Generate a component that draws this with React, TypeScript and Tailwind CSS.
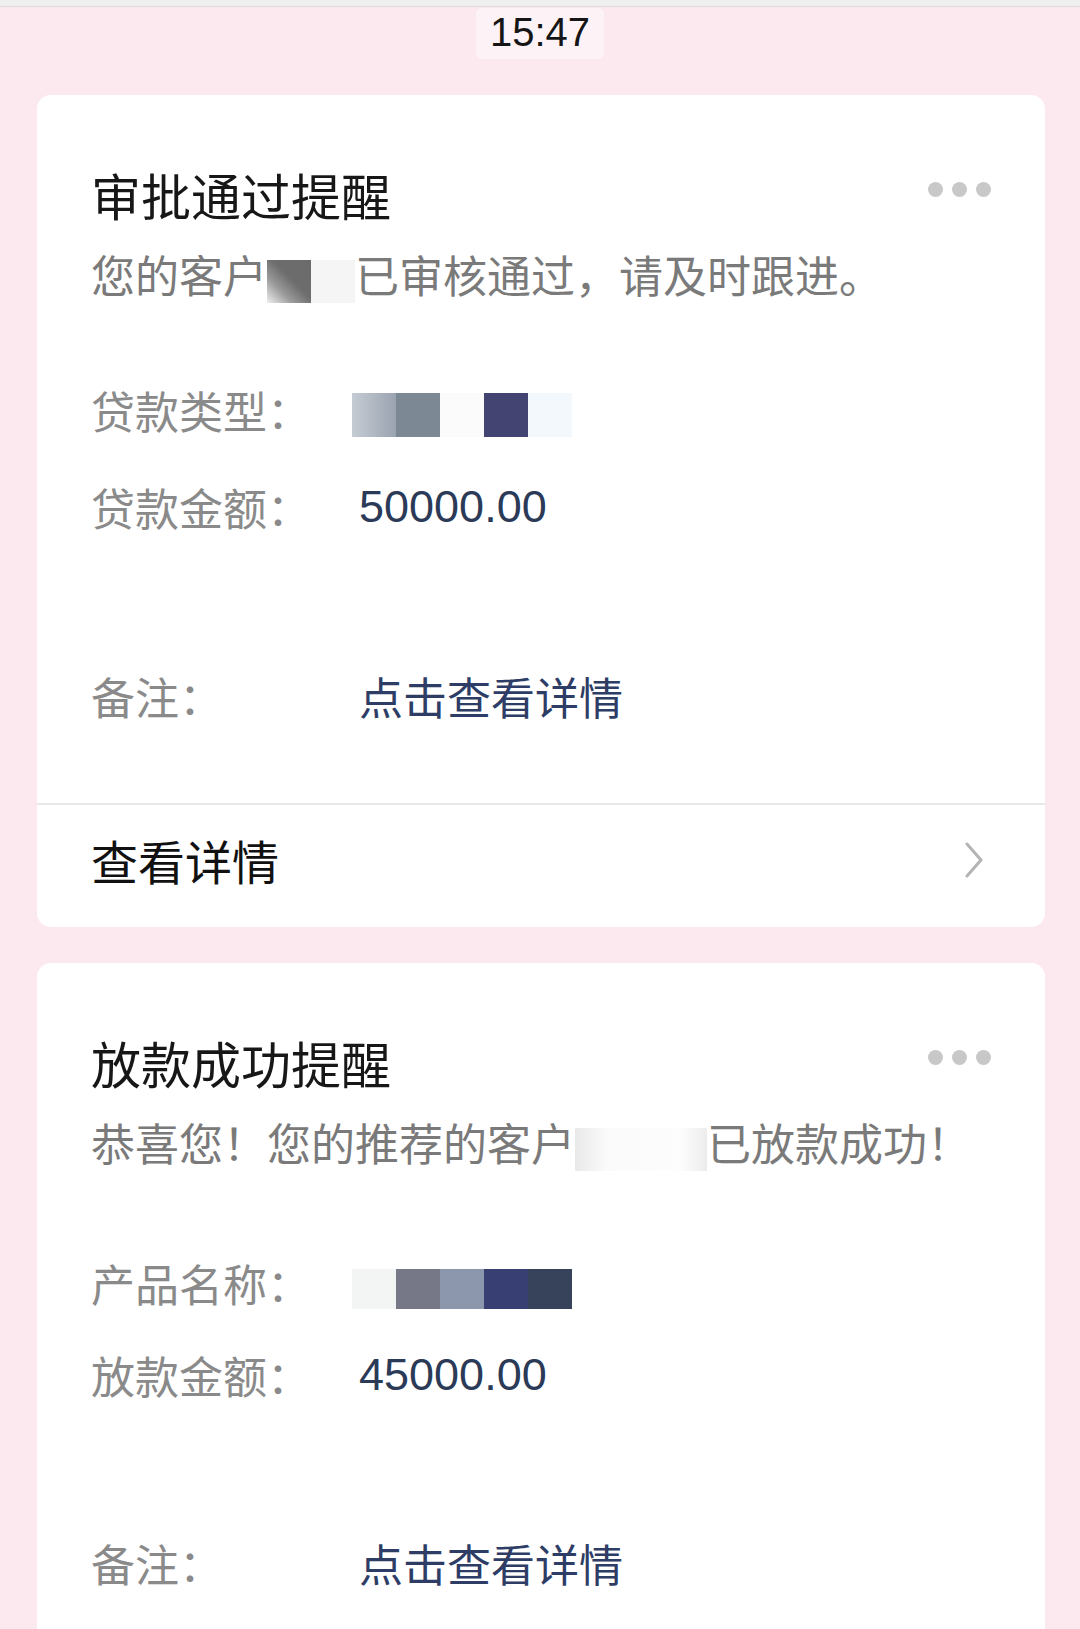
import type { ReactNode } from "react"

const CJK = "font-['Noto_Sans_CJK_SC','Liberation_Sans',sans-serif]"
const NUM = "font-['Liberation_Sans','Noto_Sans_CJK_SC',sans-serif]"

function Dots() {
  return (
    <div className="mt-[18px] flex gap-[9px]">
      <span className="h-[15px] w-[15px] rounded-full bg-[#c8c8c8]" />
      <span className="h-[15px] w-[15px] rounded-full bg-[#c8c8c8]" />
      <span className="h-[15px] w-[15px] rounded-full bg-[#c8c8c8]" />
    </div>
  )
}

function Row({ label, className, children }: { label: string; className: string; children: ReactNode }) {
  return (
    <div className={`flex h-[60px] items-center ${className}`}>
      <span className="w-[268px] shrink-0 text-[44px] leading-[60px] text-[#8a8a8a]">{label}</span>
      {children}
    </div>
  )
}

function Blocks({ colors, className }: { colors: string[]; className: string }) {
  return (
    <div className={`-ml-[7px] flex ${className}`}>
      {colors.map((c, i) => (
        <span key={i} className={`w-[44px] ${c}`} />
      ))}
    </div>
  )
}

function Header({ title }: { title: string }) {
  return (
    <div className="flex h-[60px] items-start justify-between">
      <h2 className="text-[50px] leading-[60px] text-[#171717]">{title}</h2>
      <Dots />
    </div>
  )
}

export default function App() {
  return (
    <div className={`${CJK} h-[1629px] w-[1080px] overflow-hidden bg-[#fbe9ef]`}>
      <div className="h-[7px] border-b border-[#dcdcdc] bg-[#efefef]" />
      <div className="mx-auto mt-[1px] flex h-[51px] w-[128px] items-center justify-center rounded-[6px] bg-[#fdf3f6] pb-[4px]">
        <span className={`${NUM} text-[40px] leading-none text-[#151515]`}>15:47</span>
      </div>
      <div className="mt-[36px] flex flex-col gap-[36px] pl-[37px] pr-[35px]">
        {/* 审批通过 */}
        <div className="overflow-hidden rounded-[14px] bg-white">
          <div className="px-[54px] pt-[69px]">
            <Header title="审批通过提醒" />
            <p className="mt-[20px] h-[60px] whitespace-nowrap text-[44px] leading-[60px] text-[#7a7a7a]">
              您的客户
              <span className="inline-block h-[43px] w-[44px] align-middle bg-[linear-gradient(45deg,#f0f0f0_0%,#9a9a9a_30%,#6d6d6d_55%,#6a6a6a_100%)]" />
              <span className="inline-block h-[43px] w-[44px] align-middle bg-[#f5f5f5]" />
              已审核通过，请及时跟进。
            </p>
            <Row label="贷款类型：" className="mt-[76px]">
              <Blocks
                className="mt-[10px] h-[44px]"
                colors={[
                  "bg-[linear-gradient(90deg,#c6ccd4,#9aa3b0)]",
                  "bg-[#7c8893]",
                  "bg-[#fbfbfb]",
                  "bg-[#434471]",
                  "bg-[#f2f8fb]",
                ]}
              />
            </Row>
            <Row label="贷款金额：" className="mt-[37px]">
              <span className={`${NUM} text-[45px] leading-[60px] text-[#2b3a57]`}>50000.00</span>
            </Row>
            <Row label="备注：" className="mt-[129px]">
              <span className="text-[44px] leading-[60px] text-[#2d3d66]">点击查看详情</span>
            </Row>
          </div>
          <div className="mt-[77px] h-[2px] bg-[#e8e8e8]" />
          <div className="flex h-[110px] items-center justify-between pl-[54px] pr-[61px]">
            <span className="text-[47px] leading-[60px] text-[#111]">查看详情</span>
            <svg width="20" height="36" viewBox="0 0 20 36" fill="none">
              <polyline points="3,2 17,18 3,34" stroke="#b4b4b4" strokeWidth="3" strokeLinecap="round" strokeLinejoin="round" />
            </svg>
          </div>
          <div className="h-[12px]" />
        </div>

        {/* 放款成功 */}
        <div className="overflow-hidden rounded-[14px] bg-white">
          <div className="px-[54px] pt-[69px]">
            <Header title="放款成功提醒" />
            <p className="mt-[20px] h-[60px] whitespace-nowrap text-[44px] leading-[60px] text-[#7a7a7a]">
              恭喜您！您的推荐的客户
              <span className="inline-block h-[43px] w-[132px] align-middle bg-[linear-gradient(90deg,#e9e9e9,#fbfbfb_25%,#fdfdfd_80%,#ececec)]" />
              已放款成功！
            </p>
            <Row label="产品名称：" className="mt-[81px]">
              <Blocks
                className="mt-[12px] h-[40px]"
                colors={["bg-[#f3f5f5]", "bg-[#767888]", "bg-[#8c97ae]", "bg-[#383f72]", "bg-[#36435a]"]}
              />
            </Row>
            <Row label="放款金额：" className="mt-[32px]">
              <span className={`${NUM} text-[45px] leading-[60px] text-[#2b3a57]`}>45000.00</span>
            </Row>
            <Row label="备注：" className="mt-[128px]">
              <span className="text-[44px] leading-[60px] text-[#2d3d66]">点击查看详情</span>
            </Row>
          </div>
          <div className="mt-[77px] h-[2px] bg-[#e8e8e8]" />
          <div className="h-[122px]" />
        </div>
      </div>
    </div>
  )
}
